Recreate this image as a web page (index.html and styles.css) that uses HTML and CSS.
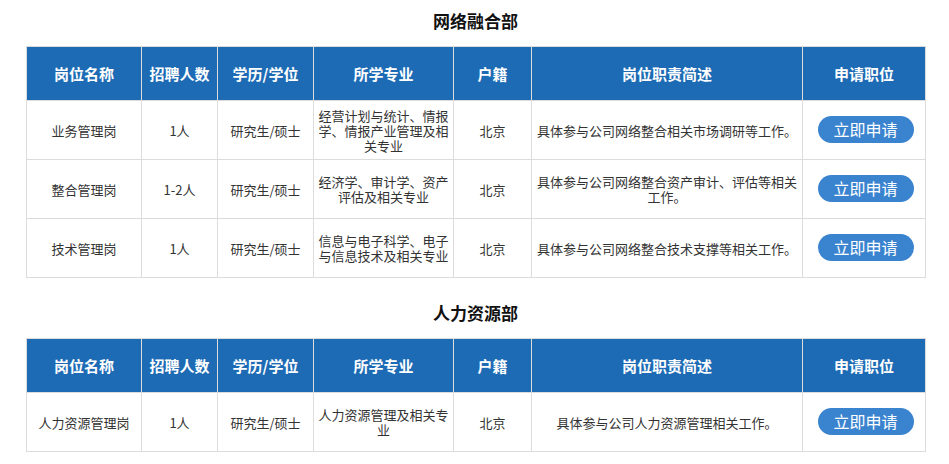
FILE: index.html
```html
<!DOCTYPE html>
<html lang="zh-CN">
<head>
<meta charset="utf-8">
<title>招聘职位</title>
<link rel="stylesheet" href="styles.css">
</head>
<body>
<div class="page">
  <section class="dept">
    <h2 class="dept-title">网络融合部</h2>
    <table class="jobs">
      <colgroup>
        <col class="c1"><col class="c2"><col class="c3"><col class="c4"><col class="c5"><col class="c6"><col class="c7">
      </colgroup>
      <thead>
        <tr><th>岗位名称</th><th>招聘人数</th><th>学历/学位</th><th>所学专业</th><th>户籍</th><th>岗位职责简述</th><th>申请职位</th></tr>
      </thead>
      <tbody>
        <tr>
          <td>业务管理岗</td><td>1人</td><td>研究生/硕士</td>
          <td>经营计划与统计、情报学、情报产业管理及相关专业</td><td>北京</td>
          <td>具体参与公司网络整合相关市场调研等工作。</td>
          <td><a class="apply" href="#">立即申请</a></td>
        </tr>
        <tr>
          <td>整合管理岗</td><td>1-2人</td><td>研究生/硕士</td>
          <td>经济学、审计学、资产评估及相关专业</td><td>北京</td>
          <td>具体参与公司网络整合资产审计、评估等相关工作。</td>
          <td><a class="apply" href="#">立即申请</a></td>
        </tr>
        <tr>
          <td>技术管理岗</td><td>1人</td><td>研究生/硕士</td>
          <td>信息与电子科学、电子与信息技术及相关专业</td><td>北京</td>
          <td>具体参与公司网络整合技术支撑等相关工作。</td>
          <td><a class="apply" href="#">立即申请</a></td>
        </tr>
      </tbody>
    </table>
  </section>
  <section class="dept">
    <h2 class="dept-title">人力资源部</h2>
    <table class="jobs">
      <colgroup>
        <col class="c1"><col class="c2"><col class="c3"><col class="c4"><col class="c5"><col class="c6"><col class="c7">
      </colgroup>
      <thead>
        <tr><th>岗位名称</th><th>招聘人数</th><th>学历/学位</th><th>所学专业</th><th>户籍</th><th>岗位职责简述</th><th>申请职位</th></tr>
      </thead>
      <tbody>
        <tr>
          <td>人力资源管理岗</td><td>1人</td><td>研究生/硕士</td>
          <td>人力资源管理及相关专业</td><td>北京</td>
          <td>具体参与公司人力资源管理相关工作。</td>
          <td><a class="apply" href="#">立即申请</a></td>
        </tr>
      </tbody>
    </table>
  </section>
</div>
</body>
</html>
```

FILE: styles.css
```css
* { box-sizing: border-box; }
html, body { margin: 0; padding: 0; background: #fff; }
body {
  font-family: "Noto Sans CJK SC", "Noto Sans", sans-serif;
  color: #333;
}
.page {
  padding: 0 0 0 26px;
}
.dept {
  width: 899px;
  margin-bottom: 14px;
}
.dept-title {
  margin: 0;
  padding-top: 10px;
  height: 46px;
  line-height: 22px;
  font-size: 17px;
  font-weight: bold;
  color: #111;
  text-align: center;
}
.jobs {
  width: 899px;
  border-collapse: collapse;
  table-layout: fixed;
}
.c1 { width: 115px; }
.c2 { width: 76px; }
.c3 { width: 96px; }
.c4 { width: 140px; }
.c5 { width: 78px; }
.c6 { width: 271px; }
.c7 { width: 123px; }
.jobs th, .jobs td {
  border: 1px solid #dcdcdc;
  text-align: center;
  vertical-align: middle;
  padding: 0 4px;
}
.jobs th {
  height: 54px;
  background: #1d6bb5;
  color: #fff;
  font-size: 15px;
  font-weight: bold;
}
.jobs td {
  height: 59px;
  font-size: 13px;
  line-height: 15px;
  color: #333;
}
.apply {
  display: inline-block;
  vertical-align: middle;
  width: 96px;
  height: 27px;
  line-height: 27px;
  border-radius: 14px;
  background: #3a83cf;
  color: #fff;
  font-size: 16px;
  text-decoration: none;
  margin-left: 3px;
  margin-top: -2px;
}
```
